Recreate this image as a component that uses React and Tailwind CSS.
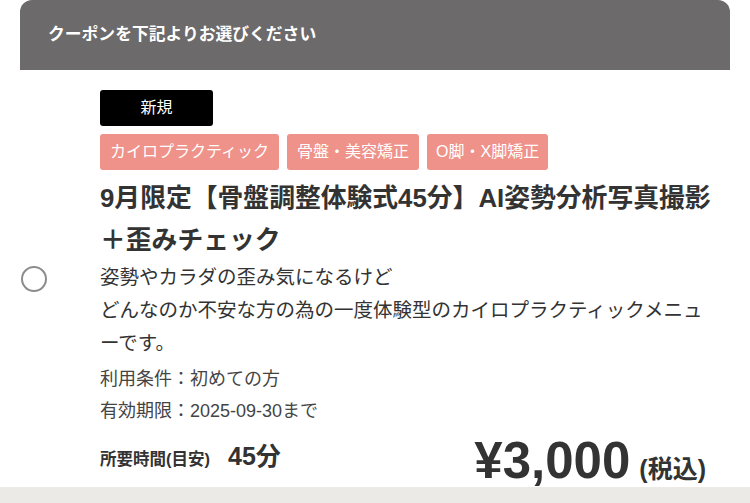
export default function App() {
  const font = { fontFamily: '"Liberation Sans", "Noto Sans CJK JP", sans-serif' };
  return (
    <div className="min-h-screen bg-[#ebeae6]" style={font}>
      <div className="bg-white px-[20px]">
        <div className="h-[70px] rounded-t-[12px] bg-[#6c6a6a] flex items-center pl-[28px]">
          <span className="text-white font-bold text-[16.8px]">クーポンを下記よりお選びください</span>
        </div>
        <div className="flex">
          <div className="w-[80px] shrink-0 flex items-center pl-[1px]">
            <div className="w-[26px] h-[26px] rounded-full border-[2.5px] border-[#8c8c8c]" />
          </div>
          <div className="flex-1 pt-[20px] pr-[18px] pb-[1px] min-w-0">
            <div className="w-[113px] h-[36px] rounded-[3px] bg-black text-white text-[16px] flex items-center justify-center">
              新規
            </div>
            <div className="mt-[8px] flex gap-[8px]">
              <span className="h-[36px] px-[10px] rounded-[3px] bg-[#ee928a] text-white text-[16px] flex items-center whitespace-nowrap">カイロプラクティック</span>
              <span className="h-[36px] px-[10px] rounded-[3px] bg-[#ee928a] text-white text-[16px] flex items-center whitespace-nowrap">骨盤・美容矯正</span>
              <span className="h-[36px] px-[9px] rounded-[3px] bg-[#ee928a] text-white text-[16px] flex items-center whitespace-nowrap">O脚・X脚矯正</span>
            </div>
            <h2 className="mt-[7px] text-[25.8px] leading-[42px] font-bold text-[#333333] whitespace-nowrap">
              9月限定【骨盤調整体験式45分】AI姿勢分析写真撮影
              <br />
              ＋歪みチェック
            </h2>
            <p className="text-[19.5px] leading-[33px] text-[#333333] whitespace-nowrap">
              姿勢やカラダの歪み気になるけど
              <br />
              どんなのか不安な方の為の一度体験型のカイロプラクティックメニュ
              <br />
              ーです。
            </p>
            <div className="mt-[3px] text-[18px] leading-[32px] text-[#444444] whitespace-nowrap">
              <p>利用条件：初めての方</p>
              <p>有効期限：2025-09-30まで</p>
            </div>
            <div className="mt-[9px] flex items-end justify-between">
              <div className="flex items-baseline gap-[18px] mb-[17px] text-[#333333] font-bold leading-none">
                <span className="text-[16.5px]">所要時間(目安)</span>
                <span className="text-[25px]">45分</span>
              </div>
              <div className="flex items-baseline gap-[9px] text-[#333333] font-bold pr-[6px]">
                <span className="text-[51px] leading-[50px]">¥3,000</span>
                <span className="text-[25px] leading-none">(税込)</span>
              </div>
            </div>
          </div>
        </div>
      </div>
    </div>
  );
}
